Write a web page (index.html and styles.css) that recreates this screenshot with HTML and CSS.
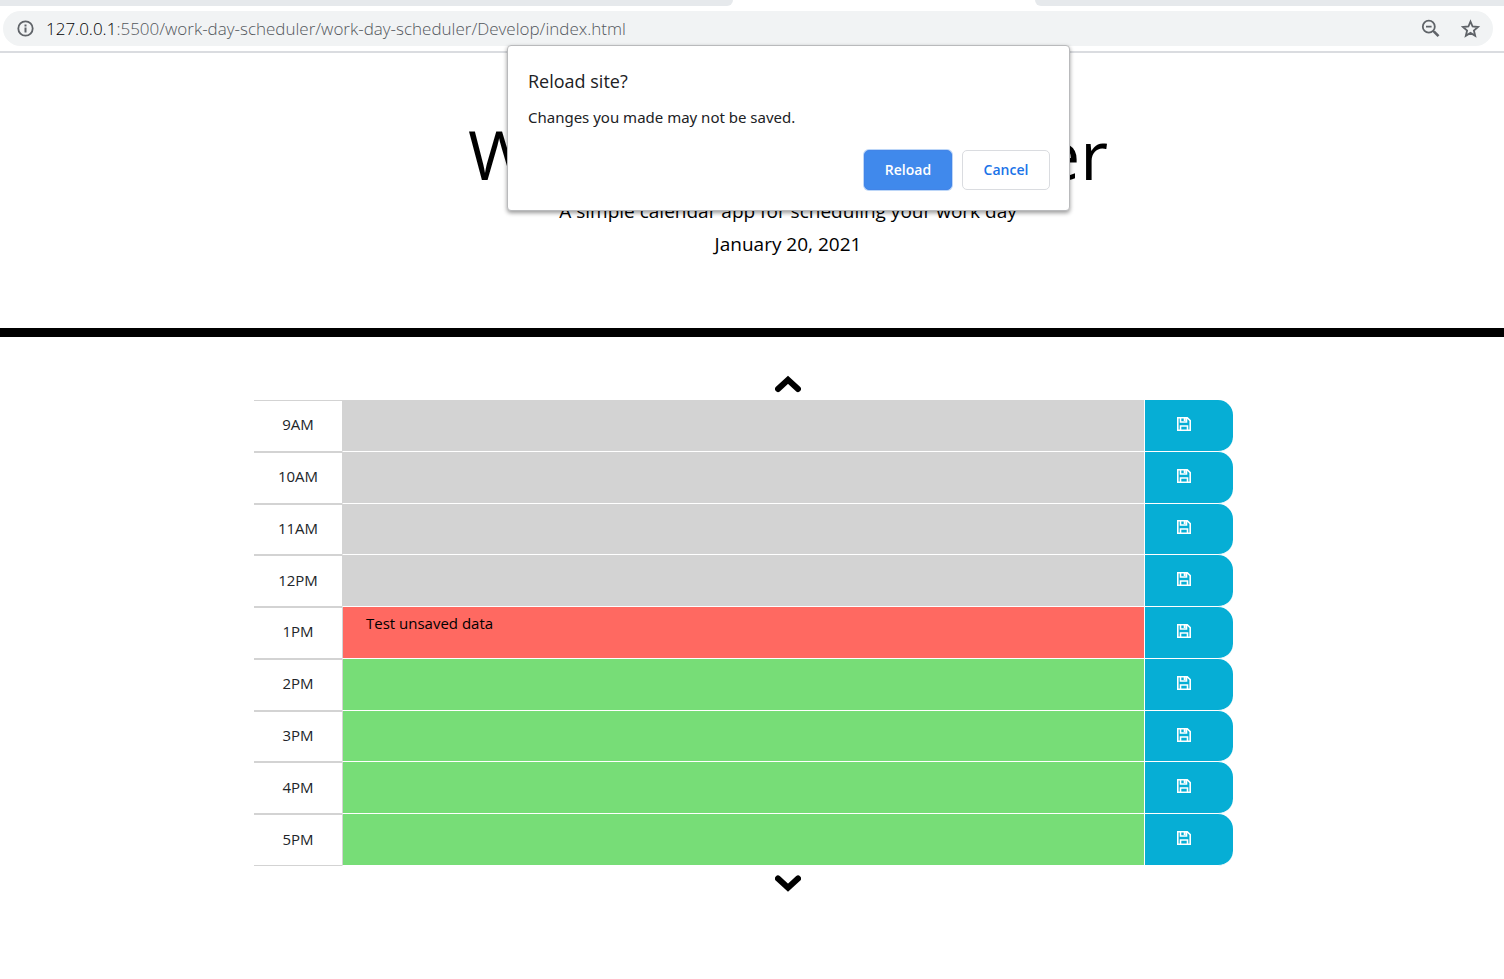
FILE: index.html
```html
<!DOCTYPE html>
<html lang="en">
<head>
<meta charset="utf-8">
<title>Work Day Scheduler</title>
<link rel="stylesheet" href="styles.css">
</head>
<body>
<svg class="sprite" aria-hidden="true">
  <symbol id="save" viewBox="0 0 14 14"><path d="M.8.8h9.500L13.200 3.700V13.200H.8z M3.500 13.200V9h7v4.200 M3.500.8v4.200h6V.8" fill="none" stroke="currentColor" stroke-width="1.600"/><path d="M6.700 1h2v3h-2z" fill="currentColor"/></symbol>
</svg>
<div class="browser">
  <div class="tabs"><span class="tab-left"></span><span class="tab-right"></span></div>
  <div class="toolbar">
    <div class="address">
      <svg class="icon" viewBox="0 0 20 20"><circle class="line" cx="10.500" cy="9.500" r="7.200"/><path d="M9.500 8.500h2v5h-2zM9.500 5.500h2v2h-2z"/></svg>
      <span class="url"><span class="host">127.0.0.1</span>:5500/work-day-scheduler/work-day-scheduler/Develop/index.html</span>
      <button class="tool" aria-label="Zoom"><svg class="icon" viewBox="0 0 20 20"><circle class="line" cx="7.800" cy="7.700" r="6"/><path class="line" d="M5 7.700h5.600M12 11.700l1.500 1.500"/><path class="handle" d="M13 12.600l4.500 4.500"/></svg></button>
      <button class="tool" aria-label="Bookmark this page"><svg class="icon" viewBox="0 0 20 20"><path class="line star" d="M9.500 2.600l2.100 4.900 5.400.5-4.100 3.500 1.300 5.300-4.700-2.900-4.700 2.900 1.300-5.300L2 8l5.400-.5z"/></svg></button>
    </div>
  </div>
</div>
<header class="masthead">
  <h1 class="title">Work Day Scheduler</h1>
  <p class="lead">A simple calendar app for scheduling your work day</p>
  <p class="lead">January 20, 2021</p>
</header>
<main class="content">
  <button class="arrow" aria-label="Earlier hours"><svg viewBox="0 0 26 18"><path d="M3 14 13 4.800 23 14"/></svg></button>
  <div class="schedule">
    <div class="row"><label class="hour" for="h9">9AM</label><textarea rows="1" class="entry past" id="h9"></textarea><button class="save" aria-label="Save 9AM"><svg><use href="#save"/></svg></button></div>
    <div class="row"><label class="hour" for="h10">10AM</label><textarea rows="1" class="entry past" id="h10"></textarea><button class="save" aria-label="Save 10AM"><svg><use href="#save"/></svg></button></div>
    <div class="row"><label class="hour" for="h11">11AM</label><textarea rows="1" class="entry past" id="h11"></textarea><button class="save" aria-label="Save 11AM"><svg><use href="#save"/></svg></button></div>
    <div class="row"><label class="hour" for="h12">12PM</label><textarea rows="1" class="entry past" id="h12"></textarea><button class="save" aria-label="Save 12PM"><svg><use href="#save"/></svg></button></div>
    <div class="row"><label class="hour" for="h13">1PM</label><textarea rows="1" class="entry present" id="h13">Test unsaved data</textarea><button class="save" aria-label="Save 1PM"><svg><use href="#save"/></svg></button></div>
    <div class="row"><label class="hour" for="h14">2PM</label><textarea rows="1" class="entry future" id="h14"></textarea><button class="save" aria-label="Save 2PM"><svg><use href="#save"/></svg></button></div>
    <div class="row"><label class="hour" for="h15">3PM</label><textarea rows="1" class="entry future" id="h15"></textarea><button class="save" aria-label="Save 3PM"><svg><use href="#save"/></svg></button></div>
    <div class="row"><label class="hour" for="h16">4PM</label><textarea rows="1" class="entry future" id="h16"></textarea><button class="save" aria-label="Save 4PM"><svg><use href="#save"/></svg></button></div>
    <div class="row"><label class="hour" for="h17">5PM</label><textarea rows="1" class="entry future" id="h17"></textarea><button class="save" aria-label="Save 5PM"><svg><use href="#save"/></svg></button></div>
  </div>
  <button class="arrow" aria-label="Later hours"><svg viewBox="0 0 26 18"><path d="M3 4.500 13 13.700 23 4.500"/></svg></button>
</main>
<div class="dialog" role="dialog" aria-labelledby="dialog-title">
  <h2 class="dialog-title" id="dialog-title">Reload site?</h2>
  <p class="dialog-text">Changes you made may not be saved.</p>
  <div class="actions"><button class="action primary">Reload</button><button class="action">Cancel</button></div>
</div>
</body>
</html>
```
FILE: styles.css
```css
* { box-sizing: border-box; }
body {
  margin: 0;
  background: #fff;
  color: #000;
  font-family: "Open Sans", "Noto Sans", sans-serif;
  font-size: 15px;
}
button { margin: 0; padding: 0; border: 0; background: none; font: inherit; cursor: pointer; }
h1, h2, p { margin: 0; font-weight: 400; }
svg { display: block; }
.sprite { display: none; }

.browser { border-bottom: 2px solid #dadce0; }
.tabs { display: flex; justify-content: space-between; height: 6px; }
.tab-left, .tab-right { background: #e6e9ec; }
.tab-left { width: 733px; border-bottom-right-radius: 8px; }
.tab-right { width: 469px; border-bottom-left-radius: 8px; }
.toolbar { padding: 5px 11px 5px 3px; }
.address {
  display: flex;
  align-items: center;
  height: 35px;
  padding: 0 12px;
  border-radius: 18px;
  background: #f1f3f4;
}
.icon { width: 20px; height: 20px; fill: #5f6368; }
.line { fill: none; stroke: #5f6368; stroke-width: 1.8; }
.handle { fill: none; stroke: #5f6368; stroke-width: 2.6; }
.url { flex: 1; margin-left: 11px; color: #53575c; font-size: 17px; font-weight: 300; line-height: 24px; }
.host { color: #000; }
.tool { margin-left: 20px; }

.masthead {
  padding: 60px 0 67px 72px;
  border-bottom: 9px solid #000;
  text-align: center;
}
.title { font-size: 68px; line-height: 82px; }
.lead { font-size: 19px; line-height: 33px; }

.content { width: 1140px; max-width: 100%; margin: 0 auto; padding: 30px 0 0 72px; }
.arrow { display: block; margin: 0 auto; padding: 8px 0 7px; }
.arrow svg { width: 26px; height: 18px; fill: none; stroke: #000; stroke-width: 6; stroke-linecap: round; stroke-linejoin: miter; }
.schedule { display: grid; grid-auto-rows: 1fr; height: 466px; margin-right: 89px; }
.row { display: grid; grid-template-columns: 88px 1fr 88px; }
.hour {
  display: flex;
  align-items: center;
  justify-content: center;
  padding-bottom: 3px;
  border-top: 1px solid #d3d3d3;
  border-bottom: 1px solid #d3d3d3;
  color: #212529;
}
.entry {
  width: 100%;
  height: 100%;
  padding: 5px 23px;
  border: 0;
  border-left: 1px solid #d3d3d3;
  border-bottom: 1px solid #fff;
  border-right: 1px solid #fff;
  border-radius: 0;
  color: #000;
  font: inherit;
  line-height: 22px;
  resize: none;
  overflow: hidden;
}
.past { background: #d3d3d3; }
.present { background: #ff6961; }
.future { background: #77dd77; }
.save {
  display: flex;
  align-items: center;
  justify-content: center;
  padding: 0 10px 3px 0;
  border-bottom: 1px solid #fff;
  border-radius: 0 15px 15px 0;
  background: #06aed5;
  color: #fff;
}
.save svg { width: 14px; height: 14px; }

.dialog {
  position: absolute;
  top: 45px;
  left: 507px;
  width: 563px;
  padding: 21px 19px 20px 20px;
  border: 1px solid #b9babc;
  border-radius: 4px;
  background: #fff;
  box-shadow: 0 2px 4px rgba(0, 0, 0, .4);
  color: #202124;
}
.dialog-title { font-size: 18px; line-height: 28px; }
.dialog-text { margin-top: 10px; font-family: "Noto Sans", sans-serif; font-size: 15px; line-height: 24px; }
.actions { display: flex; justify-content: flex-end; gap: 10px; margin-top: 21px; }
.action {
  width: 88px;
  height: 40px;
  padding-bottom: 2px;
  border: 1px solid #dadce0;
  border-radius: 5px;
  background: #fff;
  color: #1a73e8;
  font-size: 14px;
  font-weight: 600;
}
.primary { border-color: #4285e8; background: #4089ec; box-shadow: 0 0 0 1px #bcd6f8; color: #fff; }
```
